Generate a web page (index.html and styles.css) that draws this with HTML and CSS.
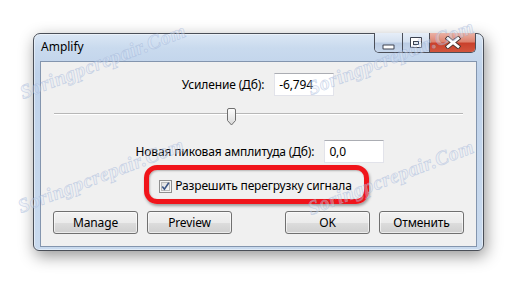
FILE: index.html
```html
<!DOCTYPE html>
<html lang="ru">
<head>
<meta charset="utf-8">
<title>Amplify</title>
<link rel="stylesheet" href="styles.css">
</head>
<body>
<div class="window">
  <div class="titlebar">
    <span class="title">Amplify</span>
    <div class="caption-buttons">
      <span class="cb cb-min"><svg width="13" height="7" viewBox="0 0 13 7"><rect x="0.5" y="1.5" width="12" height="5" rx="1" fill="#3c4250"/><rect x="1.5" y="2.5" width="10" height="3" fill="#ffffff"/></svg></span>
      <span class="cb cb-max"><svg width="12" height="11" viewBox="0 0 12 11"><rect x="0" y="0" width="12" height="11" rx="1" fill="#3c4250"/><rect x="1" y="1" width="10" height="9" fill="#ffffff"/><rect x="3" y="4" width="6" height="4" fill="#3c4250"/><rect x="4" y="5" width="4" height="2" fill="#dfe6f0"/></svg></span>
      <span class="cb cb-close"><svg width="16" height="13" viewBox="0 0 16 13"><path d="M3 2.5 L13 10.5 M13 2.5 L3 10.5" stroke="#4a3430" stroke-width="4.6" stroke-linecap="square"/><path d="M3 2.5 L13 10.5 M13 2.5 L3 10.5" stroke="#ffffff" stroke-width="2.8" stroke-linecap="square"/></svg></span>
    </div>
  </div>
  <div class="client">
    <div class="row row-gain">
      <label class="lbl">Усиление (Дб):</label>
      <span class="field">-6,794</span>
    </div>
    <div class="slider">
      <div class="track"></div>
      <svg class="thumb" width="11" height="18" viewBox="0 0 11 18">
        <defs><linearGradient id="tg" x1="0" y1="0" x2="0" y2="1"><stop offset="0" stop-color="#fdfdfd"/><stop offset="0.5" stop-color="#ececec"/><stop offset="1" stop-color="#d6d6d6"/></linearGradient></defs>
        <path d="M1.5 2 Q1.5 0.5 3 0.5 L8 0.5 Q9.5 0.5 9.5 2 L9.5 12.5 L5.5 17 L1.5 12.5 Z" fill="url(#tg)" stroke="#6f6f6f" stroke-width="1"/>
      </svg>
    </div>
    <div class="row row-peak">
      <label class="lbl">Новая пиковая амплитуда (Дб):</label>
      <span class="field">0,0</span>
    </div>
    <div class="row row-check">
      <span class="check-wrap">
        <svg class="checkbox" width="13" height="13" viewBox="0 0 13 13">
          <defs><linearGradient id="cg" x1="0" y1="0" x2="1" y2="1"><stop offset="0" stop-color="#dcdcdc"/><stop offset="1" stop-color="#fbfbfb"/></linearGradient></defs>
          <rect x="0.5" y="0.5" width="12" height="12" fill="#f4f4f4" stroke="#8f8f8f"/>
          <rect x="2.5" y="2.5" width="8" height="8" fill="url(#cg)" stroke="#b9b9b9"/>
          <path d="M3.3 6.6 L5.4 9.2 L9.8 2.8" fill="none" stroke="#3b5585" stroke-width="1.6"/>
        </svg>
        <span class="check-text">Разрешить перегрузку сигнала</span>
        <span class="highlight"></span>
      </span>
    </div>
    <div class="buttons">
      <button class="btn">Manage</button>
      <button class="btn">Preview</button>
      <span class="spacer"></span>
      <button class="btn">OK</button>
      <button class="btn">Отменить</button>
    </div>
  </div>
</div>
<span class="wm wm-a">Soringpcrepair.Com</span>
<span class="wm wm-b">Soringpcrepair.Com</span>
<span class="wm wm-c">Soringpcrepair.Com</span>
<span class="wm wm-d">Soringpcrepair.Com</span>
</body>
</html>
```
FILE: styles.css
```css
html, body {
  margin: 0;
  padding: 0;
  background: #ffffff;
}
body {
  width: 517px;
  height: 286px;
  overflow: hidden;
  position: relative;
  padding: 33px 0 0 33px;
  box-sizing: border-box;
  font-family: "Noto Sans", "Open Sans", sans-serif;
  font-size: 12px;
  letter-spacing: -0.15px;
  color: #000;
}
.window {
  width: 451px;
  box-sizing: border-box;
  border: 1px solid #4a4f58;
  border-radius: 7px 7px 6px 6px;
  padding: 0 6px 3px 6px;
  background: linear-gradient(to bottom, #dbe7f5 0px, #c9daee 14px, #bfd2ea 40px, #c4d6ec 120px, #c9daee 100%);
  box-shadow: 0 0 0 1px rgba(255,255,255,0.45) inset, 2px 5px 16px rgba(0,0,0,0.42);
}
.titlebar {
  display: flex;
  justify-content: space-between;
  align-items: flex-start;
  height: 27px;
  margin: 0 -6px;
}
.title {
  padding: 5px 0 0 7px;
  line-height: 16px;
  color: #000;
  letter-spacing: 0;
}
.caption-buttons {
  display: flex;
  margin: -1px 7px 0 0;
  border: 1px solid #4b4f59;
  border-top: none;
  border-radius: 0 0 5px 5px;
  overflow: hidden;
  height: 19px;
}
.cb {
  display: flex;
  align-items: center;
  justify-content: center;
  height: 19px;
}
.cb-min {
  width: 27px;
  border-right: 1px solid #4b4f59;
  background: linear-gradient(to bottom, #e6eef8 0%, #d5e1f0 45%, #bccde4 55%, #c7d7ec 100%);
}
.cb-min svg { margin-top: 7px; }
.cb-max {
  width: 26px;
  border-right: 1px solid #4b4f59;
  background: linear-gradient(to bottom, #e6eef8 0%, #d5e1f0 45%, #bccde4 55%, #c7d7ec 100%);
}
.cb-close {
  width: 45px;
  background: linear-gradient(to bottom, #eab2a6 0%, #de8470 45%, #c9412c 55%, #d2553d 100%);
}
.client {
  height: 186px;
  box-sizing: border-box;
  border: 1px solid #8395ae;
  background: #f0f0f0;
  padding: 11px 12px 12px 12px;
  display: flex;
  flex-direction: column;
}
.row {
  display: flex;
  justify-content: center;
  align-items: center;
  gap: 10px;
}
.row-gain { height: 23px; margin-right: 1px; }
.row-peak { height: 23px; margin-top: 15px; margin-left: 3px; }
.field {
  width: 60px;
  height: 23px;
  box-sizing: border-box;
  background: #fff;
  border: 1px solid #e2e3ea;
  border-top-color: #abadb3;
  padding: 2px 4px;
  line-height: 17px;
}
.slider {
  position: relative;
  height: 18px;
  margin: 12px 1px 0 1px;
}
.track {
  position: absolute;
  left: 0;
  right: 0;
  top: 5px;
  height: 1px;
  background: #b7b7b7;
  border-bottom: 1px solid #ffffff;
}
.thumb {
  position: absolute;
  left: 172px;
  top: 0;
}
.row-check {
  height: 14px;
  margin-top: 16px;
  margin-right: 6px;
}
.check-wrap {
  position: relative;
  display: flex;
  align-items: center;
  gap: 3px;
}
.check-text { line-height: 14px; }
.highlight {
  position: absolute;
  left: -15px;
  right: -17px;
  top: -14px;
  bottom: -11px;
  border: 5px solid #f0141a;
  border-radius: 13px;
  box-shadow: 1px 2px 3px rgba(0,0,0,0.35), inset 1px 1px 2px rgba(0,0,0,0.25);
}
.buttons {
  display: flex;
  margin-top: 18px;
  gap: 9px;
}
.spacer { flex: 1; }
.btn {
  width: 85px;
  height: 23px;
  padding: 0;
  font-family: inherit;
  font-size: 12px;
  letter-spacing: inherit;
  color: #000;
  border: 1px solid #707070;
  border-radius: 3px;
  background: linear-gradient(to bottom, #f2f2f2 0%, #ebebeb 50%, #dddddd 51%, #cfcfcf 100%);
  box-shadow: inset 0 0 0 1px rgba(255,255,255,0.6);
}
.wm {
  position: absolute;
  font-family: "Liberation Serif", serif;
  font-style: italic;
  font-weight: bold;
  font-size: 20px;
  letter-spacing: 0.5px;
  color: rgba(225, 232, 245, 0.35);
  -webkit-text-stroke: 0.7px rgba(150, 172, 212, 0.45);
  transform-origin: 0 100%;
  transform: rotate(-21deg);
  white-space: nowrap;
  pointer-events: none;
  line-height: 20px;
}
.wm-a { left: 24px; top: 82px; }
.wm-b { left: 312px; top: 78px; }
.wm-c { left: 22px; top: 196px; }
.wm-d { left: 312px; top: 198px; }
```
